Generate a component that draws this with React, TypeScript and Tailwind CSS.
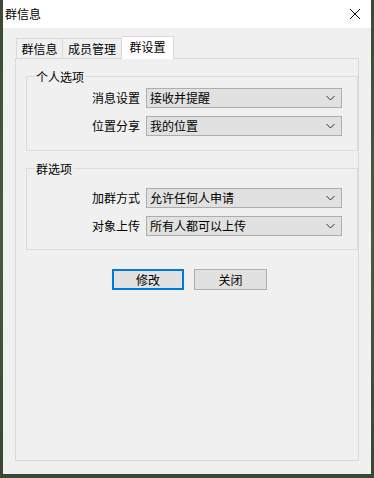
const font = { fontFamily: '"Noto Sans CJK SC", "Noto Sans", sans-serif' };

function Chevron() {
  return (
    <svg width="9" height="6" viewBox="0 0 9 6" className="text-[#333]">
      <path d="M0.5 1L4.5 5L8.5 1" fill="none" stroke="currentColor" strokeWidth="1" />
    </svg>
  );
}

function Row({ label, value }: { label: string; value: string }) {
  return (
    <div className="flex items-center justify-end gap-[6px] pr-[15px]">
      <span className="text-[12px] leading-none text-black">{label}</span>
      <div className="flex h-[20px] w-[196px] items-center justify-between border border-[#adadad] bg-[#e1e1e1] pl-[3px] pr-[6px]">
        <span className="text-[12px] leading-none text-black">{value}</span>
        <Chevron />
      </div>
    </div>
  );
}

function Group({ title, children, className }: { title: string; children: React.ReactNode; className?: string }) {
  return (
    <div className={"relative ml-[10px] border border-[#dcdcdc] " + (className ?? "")}>
      <span className="absolute -top-[8px] left-[8px] bg-[#f0f0f0] px-[1px] text-[12px] leading-[15px] text-black">
        {title}
      </span>
      {children}
    </div>
  );
}

export default function App() {
  return (
    <div className="h-[478px] w-[374px] bg-gradient-to-b from-[#3c4a34] via-[#4b5a3e] to-[#3a4632] pl-[3px]" style={font}>
      <div className="flex h-[474px] w-[368px] flex-col bg-[#f0f0f0]">
        {/* Title bar */}
        <div className="flex h-[28px] shrink-0 items-center justify-between bg-white pl-[2px] pr-[10px]">
          <span className="text-[12px] text-black">群信息</span>
          <svg width="12" height="12" viewBox="0 0 12 12" className="text-black">
            <path d="M1 1L11 11M11 1L1 11" stroke="currentColor" strokeWidth="1" />
          </svg>
        </div>

        {/* Tabs */}
        <div className="ml-[13px] mt-[8px] flex h-[22px] items-end">
          <div className="flex h-[20px] w-[47px] items-center justify-center border border-b-0 border-[#d9d9d9] bg-[#f0f0f0] text-[12px]">
            群信息
          </div>
          <div className="flex h-[20px] w-[59px] items-center justify-center border border-b-0 border-l-0 border-[#d9d9d9] bg-[#f0f0f0] text-[12px]">
            成员管理
          </div>
          <div className="relative z-10 -mb-px flex h-[23px] w-[52px] items-center justify-center border border-b-0 border-l-0 border-[#d9d9d9] bg-white pb-[2px] text-[12px]">
            群设置
          </div>
        </div>

        {/* Panel */}
        <div className="ml-[12px] flex h-[403px] w-[344px] flex-col border border-[#d9d9d9] bg-[#f0f0f0]">
          <Group title="个人选项" className="mt-[17px] flex flex-col gap-[8px] pb-[14px] pt-[11px]">
            <Row label="消息设置" value="接收并提醒" />
            <Row label="位置分享" value="我的位置" />
          </Group>
          <Group title="群选项" className="mt-[17px] flex flex-col gap-[8px] pb-[13px] pt-[19px]">
            <Row label="加群方式" value="允许任何人申请" />
            <Row label="对象上传" value="所有人都可以上传" />
          </Group>
          <div className="ml-[96px] mt-[19px] flex gap-[10px]">
            <div className="flex h-[21px] w-[72px] items-center justify-center border-2 border-[#0078d7] bg-[#e1e1e1] text-[12px]">
              修改
            </div>
            <div className="flex h-[21px] w-[73px] items-center justify-center border border-[#adadad] bg-[#e1e1e1] text-[12px]">
              关闭
            </div>
          </div>
        </div>
      </div>
    </div>
  );
}
